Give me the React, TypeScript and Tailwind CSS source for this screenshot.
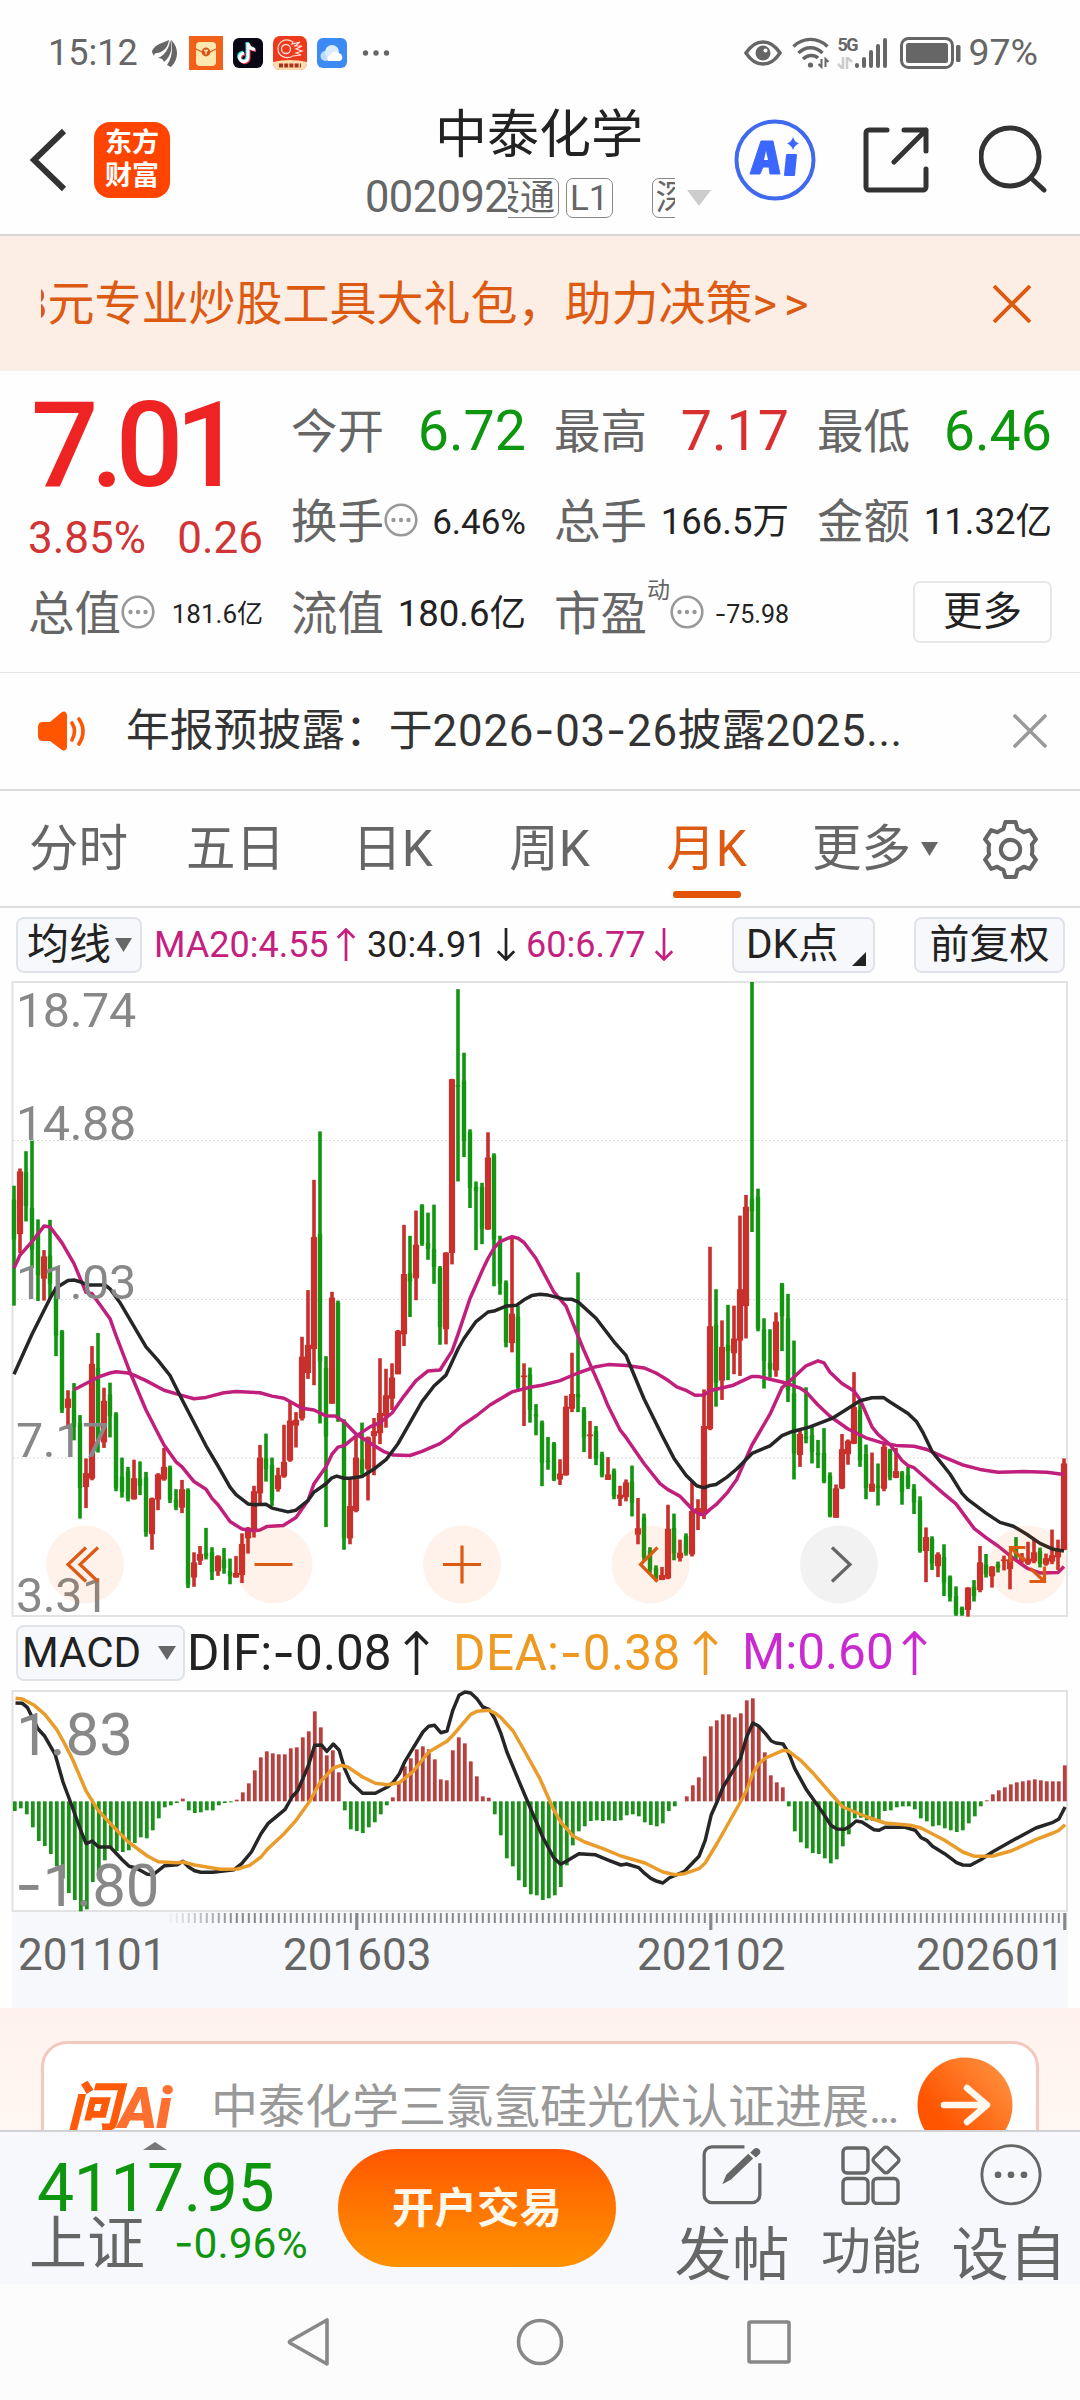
import type { ReactNode } from "react";

type Candle = [dir: "g" | "r", high: number, top: number, bottom: number, low: number];

// monthly candles, vertical values in chart units
const CANDLES: Candle[] = [
  ["g", 512, 545, 640, 797], ["r", 471, 478, 627, 672], ["g", 430, 480, 560, 597], ["g", 405, 565, 665, 708],
  ["g", 592, 625, 725, 786], ["r", 665, 680, 733, 785], ["g", 593, 678, 745, 780], ["g", 752, 770, 868, 917],
  ["g", 855, 858, 1045, 1052], ["r", 998, 1018, 1040, 1090], ["g", 981, 1000, 1085, 1117], ["g", 1057, 1075, 1230, 1303],
  ["r", 1160, 1195, 1228, 1278], ["r", 893, 935, 1208, 1212], ["g", 862, 945, 1120, 1146], ["r", 992, 1023, 1122, 1135],
  ["g", 980, 1008, 1060, 1110], ["g", 1050, 1055, 1230, 1238], ["g", 1158, 1203, 1240, 1253], ["g", 1180, 1190, 1255, 1262],
  ["r", 1163, 1207, 1257, 1258], ["g", 1167, 1208, 1225, 1247], ["g", 1192, 1205, 1335, 1346], ["r", 1253, 1255, 1340, 1377],
  ["r", 1195, 1198, 1258, 1283], ["r", 1135, 1180, 1210, 1213], ["g", 1177, 1182, 1258, 1266], ["g", 1233, 1258, 1275, 1283],
  ["r", 1211, 1233, 1277, 1290], ["g", 1231, 1235, 1460, 1468], ["r", 1383, 1407, 1443, 1465], ["r", 1368, 1387, 1403, 1413],
  ["g", 1325, 1385, 1392, 1400], ["g", 1371, 1382, 1430, 1449], ["r", 1390, 1392, 1428, 1439], ["g", 1373, 1400, 1420, 1434],
  ["g", 1398, 1428, 1440, 1459], ["r", 1392, 1432, 1443, 1443], ["r", 1338, 1363, 1437, 1456], ["r", 1323, 1325, 1350, 1386],
  ["r", 1225, 1238, 1330, 1348], ["r", 1128, 1158, 1243, 1268], ["g", 1101, 1160, 1185, 1215], ["g", 1158, 1175, 1260, 1273],
  ["r", 1182, 1200, 1233, 1239], ["r", 1080, 1168, 1203, 1206], ["r", 1025, 1070, 1165, 1168], ["r", 1050, 1068, 1082, 1134],
  ["r", 871, 918, 1065, 1070], ["r", 760, 890, 957, 971], ["r", 498, 634, 900, 986], ["g", 383, 627, 930, 1077],
  ["g", 917, 945, 1108, 1323], ["r", 764, 778, 1030, 1030], ["g", 785, 790, 1065, 1073], ["g", 1067, 1070, 1350, 1377],
  ["r", 1210, 1273, 1350, 1364], ["r", 1108, 1158, 1285, 1288], ["g", 1075, 1162, 1195, 1205], ["r", 1108, 1110, 1185, 1260],
  ["r", 1064, 1095, 1107, 1200], ["r", 922, 1052, 1100, 1126], ["r", 947, 1010, 1060, 1087], ["r", 934, 968, 1018, 1045],
  ["r", 855, 857, 960, 960], ["r", 605, 722, 865, 893], ["g", 631, 720, 740, 824], ["r", 571, 652, 732, 784],
  ["g", 556, 558, 650, 655], ["g", 576, 648, 662, 688], ["g", 557, 662, 705, 745], ["g", 703, 708, 848, 890],
  ["r", 670, 671, 853, 889], ["r", 258, 259, 672, 699], ["g", 45, 273, 277, 502], ["g", 196, 262, 405, 444],
  ["g", 378, 385, 517, 565], ["g", 502, 515, 525, 665], ["g", 505, 515, 615, 651], ["r", 385, 445, 616, 617],
  ["g", 435, 440, 640, 751], ["g", 631, 645, 745, 771], ["g", 737, 742, 885, 896], ["r", 632, 816, 886, 908],
  ["g", 797, 823, 990, 997], ["r", 934, 963, 967, 1083], ["g", 944, 960, 1045, 1075], ["g", 1031, 1055, 1060, 1105],
  ["g", 1070, 1075, 1170, 1226], ["g", 1109, 1165, 1168, 1187], ["g", 1121, 1125, 1210, 1214], ["r", 1162, 1196, 1210, 1223],
  ["r", 1011, 1037, 1200, 1201], ["r", 909, 1007, 1042, 1050], ["g", 718, 1007, 1015, 1050], ["g", 1038, 1045, 1110, 1145],
  ["r", 1071, 1103, 1107, 1161], ["g", 1083, 1095, 1160, 1176], ["g", 1144, 1150, 1200, 1205], ["r", 1157, 1198, 1211, 1211],
  ["g", 1184, 1190, 1250, 1257], ["r", 1225, 1246, 1256, 1273], ["r", 1210, 1217, 1252, 1262], ["g", 1177, 1215, 1265, 1298],
  ["r", 1254, 1326, 1341, 1364], ["g", 1291, 1300, 1395, 1405], ["g", 1371, 1380, 1425, 1432], ["g", 1414, 1420, 1445, 1452],
  ["r", 1418, 1437, 1449, 1449], ["r", 1270, 1327, 1445, 1447], ["g", 1291, 1325, 1385, 1402], ["r", 1353, 1384, 1397, 1405],
  ["g", 1338, 1345, 1385, 1391], ["r", 1215, 1285, 1388, 1393], ["r", 1257, 1278, 1290, 1330], ["r", 996, 1083, 1290, 1304],
  ["r", 657, 846, 1090, 1093], ["g", 758, 843, 980, 1037], ["r", 832, 895, 975, 1021], ["g", 795, 890, 905, 974],
  ["r", 797, 875, 910, 960], ["r", 583, 758, 880, 964], ["r", 534, 562, 798, 875], ["g", 28, 543, 573, 622],
  ["g", 519, 538, 852, 858], ["g", 827, 853, 928, 994], ["g", 853, 933, 948, 968], ["r", 813, 835, 951, 966],
  ["g", 743, 745, 822, 905], ["g", 769, 827, 998, 1026], ["g", 880, 1005, 1148, 1210], ["r", 1090, 1102, 1152, 1180],
  ["g", 991, 1108, 1113, 1124], ["g", 1085, 1105, 1145, 1172], ["g", 1116, 1147, 1152, 1183], ["g", 1088, 1147, 1215, 1219],
  ["g", 1193, 1200, 1297, 1300], ["r", 1222, 1231, 1301, 1301], ["r", 1102, 1138, 1231, 1233], ["r", 1115, 1118, 1150, 1175],
  ["r", 955, 1038, 1125, 1126], ["g", 1025, 1045, 1165, 1180], ["g", 1127, 1150, 1230, 1257], ["r", 1146, 1220, 1239, 1239],
  ["g", 1172, 1225, 1230, 1272], ["r", 1122, 1132, 1232, 1238], ["g", 1137, 1140, 1205, 1212], ["r", 1135, 1190, 1206, 1207],
  ["g", 1190, 1193, 1240, 1270], ["g", 1180, 1200, 1228, 1233], ["g", 1221, 1232, 1265, 1292], ["g", 1250, 1260, 1380, 1384],
  ["r", 1324, 1347, 1380, 1454], ["g", 1345, 1350, 1410, 1425], ["r", 1383, 1388, 1416, 1442], ["g", 1364, 1395, 1455, 1487],
  ["g", 1438, 1442, 1490, 1500], ["g", 1464, 1487, 1530, 1534], ["g", 1512, 1515, 1530, 1534], ["r", 1466, 1467, 1520, 1536],
  ["g", 1449, 1465, 1487, 1500], ["r", 1368, 1407, 1473, 1478], ["g", 1387, 1412, 1435, 1443], ["r", 1416, 1417, 1440, 1467],
  ["g", 1405, 1412, 1420, 1431], ["r", 1391, 1400, 1404, 1426], ["r", 1390, 1400, 1423, 1471], ["g", 1347, 1375, 1390, 1400],
  ["r", 1385, 1395, 1405, 1408], ["r", 1358, 1398, 1410, 1413], ["r", 1352, 1383, 1405, 1409], ["g", 1372, 1380, 1410, 1419],
  ["r", 1386, 1397, 1412, 1415], ["r", 1329, 1390, 1405, 1411], ["r", 1353, 1380, 1395, 1425], ["r", 1160, 1172, 1377, 1378],
];

// each line comes in chunks: [x offset, "x,y x,y ..."]
type Chunks = [number, string][];

const MA20: Chunks = [
  [0, "42,708 60,677 96,645 132,608 150,610 186,648 222,697 258,765 275,768 300,795 330,828 348,868 390,955 438,1045 492,1128 528,1168 546,1180 582,1215 618,1233 636,1255 654,1270 690,1310 726,1328 762,1332 780,1330 800,1322 850,1319 888,1300 924,1260 942,1220 978,1180 996,1150 1014,1133 1032,1130"],
  [1050, "0,1118 18,1107 60,1085 90,1075 126,1052 162,1012 198,975 234,952 270,950 306,905 324,865 360,780 396,715 414,685 432,660 450,645 486,633 504,637 522,647 558,685 612,765 648,798 700,900 756,1000 774,1035 810,1092 828,1110 882,1172 930,1220 954,1234 990,1250 1030,1283 1050,1293 1065,1292"],
  [2130, "0,1281 18,1270 50,1243 80,1210 108,1160 126,1128 180,1055 216,992 234,980 288,940 324,928 342,933 360,955 396,982 432,1000 450,1020 486,1085 504,1103 540,1127 576,1165 594,1177 612,1182 700,1243 738,1268 792,1326 828,1348 864,1368 918,1402 954,1422 990,1432 1044,1431 1062,1417"],
];
const MA30: Chunks = [
  [0, "42,960 96,865 150,780 168,755 204,737 222,736 240,740 262,748 315,748 330,757 360,790 438,895 474,927 510,963 546,1020 618,1130 654,1178 690,1228 708,1246 744,1268 762,1270 798,1269 816,1278 864,1287 888,1283 924,1260 942,1240 978,1220 996,1206 1010,1202 1032,1207"],
  [1050, "0,1207 36,1203 72,1185 108,1163 144,1125 180,1075 216,1025 252,988 288,962 324,900 342,875 378,835 414,812 432,810 468,798 500,796 522,783 545,773 570,770 594,772 640,781 666,782 684,788 738,827 792,883 828,915 846,950 882,1018 936,1105 972,1160 1008,1200 1040,1225 1062,1230"],
  [2130, "0,1224 18,1222 50,1205 80,1185 126,1148 180,1130 216,1106 240,1098 300,1085 366,1065 410,1043 450,1023 486,1016 520,1015 540,1026 594,1053 620,1073 640,1100 666,1143 720,1197 756,1243 774,1258 828,1290 870,1312 910,1321 950,1340 990,1362 1030,1376 1062,1380"],
];
const MA60: Chunks = [
  [0, "222,997 258,982 294,967 330,957 348,954 384,957 402,962 438,975 492,998 540,1009 582,1018 618,1015 672,1004 708,1001 780,1004 816,1012 852,1017 906,1041 942,1045 978,1059 1005,1059 1032,1073"],
  [1050, "0,1087 18,1102 60,1123 100,1143 130,1152 180,1153 216,1143 270,1125 300,1108 330,1085 380,1058 420,1033 486,1002 540,991 576,986 630,975 684,957 738,942 774,937 830,939 882,945 918,957 955,975 980,990 1010,999 1035,1010 1062,1009"],
  [2130, "0,999 70,986 126,965 144,965 225,980 270,993 288,1002 324,1033 360,1060 414,1090 468,1111 522,1124 558,1129 612,1131 648,1138 702,1157 756,1175 810,1186 864,1193 940,1191 1010,1193 1062,1198"],
];

const MACD_ZERO = 573;
const MACD_BARS = [
  602, 594, 612, 651, 692, 707, 731, 768, 805, 848, 869, 903, 897, 815, 797, 750, 715, 722, 725, 720, 698, 681, 684, 660, 624,
  591, 585, 578, 565, 600, 608, 606, 600, 600, 585, 578, 576, 568, 546, 519, 480, 441, 423, 429, 432, 432, 414, 411, 381, 363,
  303, 351, 435, 420, 486, 600, 657, 662, 668, 651, 636, 612, 585, 561, 520, 468, 444, 417, 408, 417, 447, 507, 510, 420, 381,
  399, 453, 498, 558, 562, 612, 675, 744, 768, 810, 830, 852, 855, 869, 864, 855, 830, 765, 705, 663, 648, 632, 630, 632, 630,
  632, 630, 615, 612, 618, 636, 644, 648, 639, 602, 588, 573, 558, 525, 501, 438, 348, 330, 312, 312, 321, 309, 270, 264, 348,
  426, 495, 516, 531, 588, 663, 696, 714, 728, 731, 744, 759, 747, 708, 672, 624, 622, 630, 632, 630, 602, 600, 591, 588, 588,
  597, 624, 633, 648, 645, 654, 660, 665, 660, 639, 618, 588, 570, 552, 540, 531, 522, 516, 513, 510, 507, 510, 513, 513, 513,
  465,
];
const DIF: Chunks = [
  [0, "45,278 65,279 80,292 110,355 130,378 160,432 183,515 210,590 235,662 250,700 268,692 286,710 320,710 355,748 375,768 395,773 428,792 445,793 478,766 515,763 531,753 548,770 565,781 583,786 618,786 680,778 702,760 730,725 758,670 778,640 828,597 848,560 865,540 896,465 914,405 934,404 949,423 968,401 985,420 1000,473 1018,515 1053,549 1090,549 1125,530 1141,517 1160,490 1176,453 1228,365 1245,348 1262,345 1280,367 1298,362 1315,300 1333,255 1350,245 1367,248 1385,265 1402,290 1420,297 1437,325 1455,370 1472,425 1510,520 1545,605 1568,660"],
  [1568, "8,680 40,742 60,762 78,752 113,730 160,733 200,750 235,764 252,761 287,772 305,790 322,804 340,813 357,818 375,803 420,783 462,738 480,690 497,615 515,573 532,530 582,445 600,380 618,338 636,348 655,370 672,392 685,398 706,401 723,430 740,475 775,540 820,605 845,645 862,656 885,657 900,648 918,632 935,635 970,658 985,660 1002,651 1060,651 1090,660 1107,682 1123,690 1140,708 1175,730 1210,757 1228,764 1250,765 1280,748 1315,724 1370,692 1440,653 1490,636 1507,626 1525,590"],
];
const DEA: Chunks = [
  [0, "45,264 65,266 97,283 130,312 165,358 185,395 210,445 250,542 285,600 330,650 373,695 428,737 460,754 515,757 531,755 565,764 640,777 690,776 725,765 758,740 778,715 825,670 860,630 900,572 930,515 968,473 990,465 1010,470 1053,500 1090,519 1125,523 1160,517 1200,483 1245,425 1298,393 1315,375 1367,312 1385,303 1402,301 1420,300 1437,308 1455,322 1490,362 1525,425 1568,505"],
  [1568, "40,598 60,635 78,655 96,677 130,695 183,715 235,737 305,758 357,785 392,793 420,790 462,775 480,758 515,698 582,575 600,540 618,490 636,460 655,443 706,420 723,423 757,450 792,487 845,550 880,590 950,620 1002,638 1075,645 1107,653 1175,690 1228,725 1262,738 1315,737 1370,721 1440,688 1490,668 1507,660 1525,643"],
];

const RED = "#c9302c";
const GREEN = "#129612";

const priceY = (v: number) => (v - 28) / 2.376 + 1;
const macdY = (v: number) => (v - 242) / 3 + 1;

function toPoints(chunks: Chunks, xScale: number, y: (v: number) => number) {
  return chunks
    .flatMap(([dx, pts]) =>
      pts.split(" ").map((p) => {
        const [px, py] = p.split(",").map(Number);
        return `${((px + dx) / xScale).toFixed(1)},${y(py).toFixed(1)}`;
      })
    )
    .join(" ");
}

function Line({ points, color }: { points: string; color: string }) {
  return <polyline points={points} fill="none" stroke={color} strokeWidth="3.5" strokeLinejoin="round" />;
}

function Dash() {
  return <span className="font-['Inter']">-</span>;
}

function Arrow({ down, className }: { down?: boolean; className: string }) {
  return (
    <svg viewBox="0 0 24 44" fill="none" stroke="currentColor" strokeWidth="3.6" className={className}>
      {down ? <path d="M12 0v42M1 31l11 11 11-11" /> : <path d="M12 44V2M1 13L12 2l11 11" />}
    </svg>
  );
}

function Triangle({ className }: { className: string }) {
  return (
    <svg viewBox="0 0 16 14" preserveAspectRatio="none" className={className}>
      <path d="M0 0h16L8 14z" fill="currentColor" />
    </svg>
  );
}

function Cross({ className }: { className: string }) {
  return (
    <svg viewBox="0 0 38 38" fill="none" stroke="currentColor" strokeWidth="3.8" className={className}>
      <path d="M1 1l36 36M37 1L1 37" />
    </svg>
  );
}

function InfoDots() {
  return (
    <svg viewBox="0 0 34 34" className="w-[34px] h-[34px] shrink-0 -mt-[5px] text-[#999]">
      <circle cx="17" cy="17" r="15.3" fill="none" stroke="currentColor" strokeWidth="2.6" />
      <circle cx="9.5" cy="17" r="2.2" fill="currentColor" />
      <circle cx="17" cy="17" r="2.2" fill="currentColor" />
      <circle cx="24.5" cy="17" r="2.2" fill="currentColor" />
    </svg>
  );
}

function StatusBar() {
  return (
    <div className="h-[105px] pl-[48px] pr-[42px] flex items-center justify-between text-[#666] text-[36px] leading-none">
      <div className="flex items-center">
        <span className="w-[104px]">15:12</span>
        <svg viewBox="0 0 26 28" className="w-[26px] h-[28px]" fill="#666">
          <path d="M0 12C3 5 11 4 17 1c-1 7-5 12-12 13-2 0-3 1-3 3C1 15 0 14 0 12z" />
          <path d="M6 19c7-3 11-9 12-18 3 8 1 16-6 22-1-3-3-4-6-4z" />
          <path d="M15 26c5-7 6-16 4-25 7 6 9 18 0 27z" />
        </svg>
        <svg viewBox="0 0 34 34" className="w-[34px] h-[34px] ml-[11px]">
          <rect width="34" height="34" fill="#f2601a" />
          <rect x="7" y="6" width="20" height="24" rx="4" fill="#ffe7b0" />
          <path d="M7 13l8 4a4 4 0 0 0 4 0l8-4" fill="none" stroke="#d9541a" strokeWidth="1.2" />
          <circle cx="17" cy="16" r="4.4" fill="#d9541a" />
          <path d="M15 14.5h4M17 14.5v4" stroke="#ffe7b0" strokeWidth="1.3" />
        </svg>
        <svg viewBox="0 0 30 30" className="w-[30px] h-[30px] ml-[10px]">
          <rect width="30" height="30" rx="6" fill="#0b0816" />
          <path d="M15 5v14.5a4.2 4.2 0 1 1-4-4.2M15 5c.5 4 3 6 7 6.5" transform="translate(-1 -1)" fill="none" stroke="#27e6e0" strokeWidth="3" />
          <path d="M15 5v14.5a4.2 4.2 0 1 1-4-4.2M15 5c.5 4 3 6 7 6.5" transform="translate(1 1)" fill="none" stroke="#f43b5c" strokeWidth="3" />
          <path d="M15 5v14.5a4.2 4.2 0 1 1-4-4.2M15 5c.5 4 3 6 7 6.5" fill="none" stroke="#fff" strokeWidth="3" />
        </svg>
        <svg viewBox="0 0 34 34" className="w-[34px] h-[34px] ml-[10px]">
          <rect width="34" height="34" rx="7" fill="#ee3a1c" />
          <path d="M0 26q17-4 34 0v1a7 7 0 0 1-7 7H7a7 7 0 0 1-7-7z" fill="#fbdcae" />
          <path d="M6 29.5h22" stroke="#a8321a" strokeWidth="4" strokeDasharray="4 1.2" />
          <circle cx="13" cy="13" r="4.5" fill="none" stroke="#ffe1dc" strokeWidth="1.3" />
          <path d="M20 6C12 1 5 6 5 13s8 11 15 7l8-1-5-2 6-2-6-2 6-3-7 0 5-4-8 2z" fill="none" stroke="#ffe1dc" strokeWidth="1.2" />
        </svg>
        <svg viewBox="0 0 30 30" className="w-[30px] h-[30px] ml-[10px]">
          <rect width="30" height="30" rx="6" fill="#3c8bf5" />
          <circle cx="8.5" cy="18" r="5" fill="#bcdcff" />
          <circle cx="15" cy="14" r="7" fill="#dcecff" />
          <path d="M11 23a4 4 0 0 1 2-6 6 6 0 0 1 9-2 4.3 4.3 0 0 1 1 8z" fill="#fff" />
        </svg>
        <svg viewBox="0 0 28 6" className="w-[28px] h-[6px] ml-[15px]" fill="#666">
          <circle cx="3.5" cy="3" r="2.7" />
          <circle cx="14" cy="3" r="2.7" />
          <circle cx="24.5" cy="3" r="2.7" />
        </svg>
      </div>
      <div className="flex items-center">
        <svg viewBox="0 0 38 26" className="w-[38px] h-[26px]">
          <path d="M2 13C8 4 13 2 19 2s11 2 17 11c-6 9-11 11-17 11S8 22 2 13z" fill="none" stroke="#666" strokeWidth="3.6" />
          <circle cx="19" cy="13" r="7.5" fill="#666" />
          <circle cx="21.5" cy="10.5" r="2" fill="#fff" />
        </svg>
        <svg viewBox="0 0 38 32" className="w-[38px] h-[32px] ml-[10px]" fill="none" stroke="#666" strokeWidth="3.4">
          <path d="M1.5 9.500C11 0 26 0 35.500 9.500M6.500 16c7-7 17-7 24 0M11 22c4-4 11-5 15-1" />
          <circle cx="18.500" cy="28" r="2.6" fill="#666" stroke="none" />
          <path d="M29.500 22v8l-3-3M33.500 30v-8l3 3" strokeWidth="2" />
        </svg>
        <div className="ml-[7px] w-[17px] h-[32px] flex flex-col justify-between">
          <span className="text-[18px] leading-[16px] font-bold tracking-[-1.5px]">5G</span>
          <svg viewBox="0 0 16 12" className="w-[16px] h-[12px]" fill="none" stroke="#ccc" strokeWidth="2.6">
            <path d="M6 0v12L1 7M10 12V0l5 5" />
          </svg>
        </div>
        <svg viewBox="0 0 34 32" className="w-[34px] h-[32px]" stroke="#666" strokeWidth="4" strokeLinecap="round">
          <path d="M3 28v1M10 22v7M17 15v14M24 9v20M31 3v26" />
        </svg>
        <svg viewBox="0 0 62 32" className="w-[62px] h-[32px] ml-[12px]" fill="#666">
          <rect x="1.5" y="1.5" width="51" height="29" rx="7" fill="none" stroke="#666" strokeWidth="3" />
          <rect x="6" y="6" width="42" height="20" rx="2.5" />
          <rect x="56" y="8" width="4.5" height="17" rx="1.500" />
        </svg>
        <span className="ml-[6px] text-[37.5px]">97%</span>
      </div>
    </div>
  );
}

function Tag({ children }: { children: ReactNode }) {
  return (
    <span className="h-[40px] px-[3px] shrink-0 flex items-center border border-[#888] rounded-[7px] text-[35px] leading-none whitespace-nowrap">
      {children}
    </span>
  );
}

function Header() {
  return (
    <div className="h-[131px] pl-[30px] flex border-b-2 border-[#d6d6d6]">
      <svg viewBox="0 0 38 64" className="w-[38px] h-[64px] mt-[23px]" fill="none" stroke="#333" strokeWidth="6">
        <path d="M34 3L4 32l30 29" />
      </svg>
      <div className="ml-[26px] mt-[17px] w-[76px] h-[76px] rounded-[16px] bg-[#ff4400] text-white font-bold text-[27px] leading-[33px] flex flex-col items-center justify-center">
        <span>东方</span>
        <span>财富</span>
      </div>
      <div className="ml-[197px] flex flex-col">
        <span className="mt-[5px] pl-[68px] text-[52px] leading-[52px] text-[#222]">中泰化学</span>
        <div className="mt-[16px] h-[40px] flex items-center text-[#666]">
          <span className="w-[141px] text-[43.5px] tracking-[-0.6px] leading-none -ml-[2px] mr-[2px]">002092</span>
          <div className="w-[167px] h-[40px] overflow-hidden flex">
            <div className="-ml-[62px] flex">
              <Tag>深股通</Tag>
              <span className="w-[7px] shrink-0" />
              <Tag>L1</Tag>
              <span className="w-[39px] shrink-0" />
              <Tag>深股通</Tag>
            </div>
          </div>
          <Triangle className="ml-[12px] w-[24px] h-[16px] text-[#ccc]" />
        </div>
      </div>
      <svg viewBox="0 0 82 82" className="w-[82px] h-[82px] ml-[23px] mt-[14px]">
        <circle cx="41" cy="41" r="38.5" fill="none" stroke="#3f69ee" strokeWidth="4" />
        <path d="M27 22h12l7 33H36l-1-7h-6l-3 7H16z" fill="#3b66ff" stroke="#3b66ff" strokeWidth="1" strokeLinejoin="round" />
        <path d="M32 32l-2 9h4z" fill="#fff" />
        <path d="M53 36h9l-2 20h-9z" fill="#3b66ff" stroke="#3b66ff" strokeWidth="2" strokeLinejoin="round" />
        <path d="M59 18q1.500 5 6 6.500-4.500 1.500-6 6.500-1.500-5-6-6.500 4.500-1.500 6-6.500z" fill="#3b66ff" />
      </svg>
      <svg viewBox="0 0 66 66" className="w-[66px] h-[66px] ml-[47px] mt-[22px]" fill="none" stroke="#333" strokeWidth="5" strokeLinecap="round" strokeLinejoin="round">
        <path d="M24 3H6a3 3 0 0 0-3 3v54a3 3 0 0 0 3 3h54a3 3 0 0 0 3-3V42M41 3h22v21M63 3L31 35" />
      </svg>
      <svg viewBox="0 0 68 68" className="w-[68px] h-[68px] ml-[50px] mt-[20px]" fill="none" stroke="#333" strokeWidth="5" strokeLinecap="round">
        <circle cx="31" cy="32" r="29" />
        <path d="M52 53l13 12" />
      </svg>
    </div>
  );
}

function PromoBanner() {
  return (
    <div className="h-[135px] pl-[41px] pr-[49px] bg-[#fceee4] text-[#dc5a12] flex items-center justify-between">
      <div className="overflow-hidden">
        <p className="-ml-[20px] text-[47px] leading-[60px] whitespace-nowrap">
          8元专业炒股工具大礼包，助力决策<span className="tracking-[7px]">&gt;&gt;</span>
        </p>
      </div>
      <Cross className="w-[38px] h-[38px]" />
    </div>
  );
}

function Quote({ label, children, info, sup }: { label: string; children: ReactNode; info?: boolean; sup?: string }) {
  return (
    <div className="h-[60px] flex items-center">
      <span className="text-[46.5px] text-[#666]">{label}</span>
      {sup && <sup className="text-[23px] leading-none text-[#666] -mt-[24px]">{sup}</sup>}
      {info && <InfoDots />}
      <span className="ml-auto text-[#222]">{children}</span>
    </div>
  );
}

function QuotePanel() {
  return (
    <div className="h-[302px] px-[28px] pt-[24px] border-b border-[#e6e6e6] leading-none whitespace-nowrap">
      <div className="grid grid-cols-[235px_235px_235px_235px] gap-x-[28px]">
        <div className="h-[180px]">
          <div className="h-[106px] pt-[2px] pl-[3px] text-[119px] font-medium leading-[98px] tracking-[-8px] text-[#ee2424]">7.01</div>
          <div className="mt-[15px] flex justify-between text-[44px] text-[#d03434]">
            <span>3.85%</span>
            <span>0.26</span>
          </div>
        </div>
        <div className="h-[180px] pt-[7px] flex flex-col gap-[30px]">
          <Quote label="今开"><span className="text-[55.5px]">
            <span className="text-[#0f960f]">6.72</span></span>
          </Quote>
          <Quote label="换手" info><span className="text-[35px]">6.46%</span></Quote>
        </div>
        <div className="h-[180px] pt-[7px] flex flex-col gap-[30px]">
          <Quote label="最高"><span className="text-[55.5px] text-[#d92f2f]">7.17</span></Quote>
          <Quote label="总手"><span className="text-[36.5px]">166.5万</span></Quote>
        </div>
        <div className="h-[180px] pt-[7px] flex flex-col gap-[30px]">
          <Quote label="最低"><span className="text-[55.5px] text-[#0f960f]">6.46</span></Quote>
          <Quote label="金额"><span className="text-[36.5px]">11.32亿</span></Quote>
        </div>
        <div className="pt-[9px]">
          <Quote label="总值" info><span className="text-[26px]">181.6亿</span></Quote>
        </div>
        <div className="pt-[9px]">
          <Quote label="流值"><span className="text-[36.5px]">180.6亿</span></Quote>
        </div>
        <div className="pt-[9px]">
          <Quote label="市盈" sup="动" info><span className="text-[25px]"><Dash />75.98</span></Quote>
        </div>
        <div className="pt-[6px] flex justify-end">
          <button className="w-[139px] h-[62px] border-2 border-[#e8e8e8] rounded-[7px] text-[39.5px] text-[#222]">更多</button>
        </div>
      </div>
    </div>
  );
}

function NoticeRow() {
  return (
    <div className="h-[118px] pl-[38px] pr-[33px] flex items-center border-b-2 border-[#dcdcdc]">
      <svg viewBox="0 0 50 40" className="w-[50px] h-[40px]" fill="#ff5500">
        <path d="M0 16q0-5 5-5h7L24 1q4-2 5 3v32q-1 5-5 3L12 30H5q-5 0-5-5z" />
        <path d="M34 12q5 8 0 17M41 8q8 12 0 25" fill="none" stroke="#ff5500" strokeWidth="3.6" strokeLinecap="round" />
      </svg>
      <p className="ml-[38px] text-[43.8px] leading-none text-[#333] whitespace-nowrap">
        年报预披露：于<span className="tracking-[0.8px]">2026<Dash />03<Dash />26</span>披露
        <span className="tracking-[0.6px]">2025...</span>
      </p>
      <Cross className="ml-auto w-[34px] h-[34px] text-[#999]" />
    </div>
  );
}

const TABS = ["分时", "五日", "日K", "周K", "月K"];

function PeriodTabs() {
  return (
    <div className="h-[117px] flex border-b-2 border-[#dcdcdc] text-[49.5px] leading-none text-[#666]">
      {TABS.map((t) => (
        <div
          key={t}
          className={"w-[157px] pt-[34px] flex flex-col items-center " + (t === "月K" ? "text-[#dc5a12]" : "")}
        >
          <span>{t}</span>
          {t === "月K" && <span className="mt-[16px] w-[68px] h-[7px] rounded-[3px] bg-[#e25508]" />}
        </div>
      ))}
      <span className="ml-[27px] pt-[34px]">更多</span>
      <Triangle className="ml-[10px] mt-[51px] w-[17px] h-[14px]" />
      <svg viewBox="0 0 60 60" className="ml-[42px] mt-[28px] w-[61px] h-[61px]" fill="none" stroke="#666" strokeWidth="4" strokeLinejoin="round">
        <path d="M25 3h10l2 7q3 1 6 3l6-2 6 9-4 5q1 5 0 10l4 5-6 9-6-2q-3 2-6 3l-2 7H25l-2-7q-3-1-6-3l-6 2-6-9 4-5q-1-5 0-10l-4-5 6-9 6 2q3-2 6-3z" />
        <circle cx="30" cy="30" r="9.5" />
      </svg>
    </div>
  );
}

function Chip({ className, children }: { className: string; children: ReactNode }) {
  return (
    <div className={"flex items-center shrink-0 bg-[#f7f8fb] border-2 border-[#e0e2ea] rounded-[8px] text-[#222] leading-none whitespace-nowrap " + className}>
      {children}
    </div>
  );
}

function MaRow() {
  return (
    <div className="h-[73px] pl-[16px] flex items-center text-[36px] leading-none whitespace-nowrap">
      <Chip className="w-[126px] h-[56px] pl-[9px] text-[42px]">
        均线
        <Triangle className="ml-[4px] w-[17px] h-[14px] text-[#666]" />
      </Chip>
      <div className="ml-[12px] w-[213px] flex items-center text-[#c4207f]">
        <span className="w-[182px]">MA20:4.55</span>
        <Arrow className="w-[20px] h-[33px]" />
      </div>
      <div className="w-[159px] flex items-center text-[#222]">
        <span className="w-[129px]">30:4.91</span>
        <Arrow down className="w-[20px] h-[33px]" />
      </div>
      <div className="w-[206px] flex items-center text-[#c4207f]">
        <span className="w-[128px]">60:6.77</span>
        <Arrow down className="w-[20px] h-[33px]" />
      </div>
      <Chip className="w-[143px] h-[56px] pl-[12px] text-[40.5px]">
        <span className="w-[106px]">DK点</span>
        <svg viewBox="0 0 14 14" className="w-[14px] h-[14px] mt-[28px]">
          <path d="M14 0v14H0z" fill="#222" />
        </svg>
      </Chip>
      <Chip className="ml-[39px] w-[151px] h-[56px] justify-center text-[40px]">前复权</Chip>
    </div>
  );
}

const PRICE_LABELS: [string, number][] = [
  ["18.74", 46], ["14.88", 159], ["11.03", 318], ["7.17", 476], ["3.31", 631],
];

function ChartButton({ x, color = "#dc5a12", fill = "#ff5500", d }: { x: number; color?: string; fill?: string; d: string }) {
  return (
    <g transform={`translate(${x} 583.5)`}>
      <circle r="39" fill={fill} fillOpacity="0.08" />
      <path d={d} fill="none" stroke={color} strokeWidth="3.2" />
    </g>
  );
}

function PriceChart() {
  return (
    <svg viewBox="0 0 1080 636" className="block w-[1080px] h-[636px]">
      <rect x="12.5" y="1" width="1054.5" height="634" fill="#fff" stroke="#e2e2e2" strokeWidth="2" />
      {[159.5, 318.5, 477].map((y) => (
        <line key={y} x1="13" x2="1067" y1={y} y2={y} stroke="#ddd" strokeDasharray="2 2" />
      ))}
      {CANDLES.map(([dir, high, top, bottom, low], i) => {
        const x = 14 + 6 * i;
        const body = dir === "r" ? 6.2 : 4.4;
        const color = dir === "r" ? RED : GREEN;
        return (
          <g key={i} fill={color}>
            <rect x={x - 1.8} y={priceY(high)} width={3.6} height={priceY(low) - priceY(high)} />
            <rect x={x - body / 2} y={priceY(top)} width={body} height={Math.max(1.5, priceY(bottom) - priceY(top))} />
          </g>
        );
      })}
      <Line points={toPoints(MA60, 3, priceY)} color="#c0207c" />
      <Line points={toPoints(MA20, 3, priceY)} color="#c0207c" />
      <Line points={toPoints(MA30, 3, priceY)} color="#262626" />
      <g fill="#888" fontSize="48.5" letterSpacing="-0.4">
        {PRICE_LABELS.map(([t, y]) => (
          <text key={t} x="16" y={y}>{t}</text>
        ))}
      </g>
      <ChartButton x={85} d="M1-17L-17 0 1 17M13-17L-5 0 13 17" />
      <ChartButton x={273.5} d="M-19 0h38" />
      <ChartButton x={462} d="M-19 0h38M0-19v38" />
      <ChartButton x={650.5} d="M7-17L-10 0 7 17" />
      <ChartButton x={839} color="#666" fill="#555" d="M-7-17L11 0-7 17" />
      <ChartButton x={1027.5} d="M-2-17h-15v15M-17-17L-3-4M2 17h15V2M17 17L3 4" />
    </svg>
  );
}

function MacdRow() {
  return (
    <div className="h-[73px] pl-[16px] pb-[1px] flex items-center text-[49.5px] leading-none whitespace-nowrap">
      <Chip className="w-[169px] h-[56px] pl-[4px] text-[42px]">
        <span className="w-[136px]">MACD</span>
        <Triangle className="w-[18px] h-[14px] text-[#666]" />
      </Chip>
      <div className="ml-[2px] w-[266px] flex items-center text-[#222]">
        <span className="w-[217px]">DIF:<Dash />0.08</span>
        <Arrow className="w-[25px] h-[44px]" />
      </div>
      <div className="w-[289px] flex items-center text-[#ee9a22]">
        <span className="w-[240px] tracking-[0.4px]">DEA:<Dash />0.38</span>
        <Arrow className="w-[25px] h-[44px]" />
      </div>
      <div className="flex items-center text-[#c92bd0]">
        <span className="w-[160px]">M:0.60</span>
        <Arrow className="w-[25px] h-[44px]" />
      </div>
    </div>
  );
}

function MacdChart() {
  const zero = macdY(MACD_ZERO);
  return (
    <svg viewBox="0 0 1080 222" className="block w-[1080px] h-[222px]">
      <rect x="12.5" y="1" width="1054.5" height="220" fill="#fff" stroke="#e2e2e2" strokeWidth="2" />
      {MACD_BARS.map((v, i) => {
        const y = macdY(v);
        const up = v < MACD_ZERO;
        return (
          <rect
            key={i}
            x={12.9 + 6 * i}
            y={up ? y : zero}
            width="3.8"
            height={Math.abs(zero - y)}
            fill={up ? "#b8403f" : "#1e901e"}
          />
        );
      })}
      <Line points={toPoints(DIF, 2.904, macdY)} color="#262626" />
      <Line points={toPoints(DEA, 2.904, macdY)} color="#ea9c2a" />
      <g fill="#888" fontSize="60">
        <text x="16" y="65">1.83</text>
        <text x="15" y="216"><tspan fontFamily="Inter">-</tspan>1.80</text>
      </g>
    </svg>
  );
}

const MAJOR_TICKS = [57, 116, 175];

function TimeAxis() {
  return (
    <div className="mx-[12px] h-[96px] bg-[#f7f8fb] text-[44px] leading-none text-[#666]">
      <svg viewBox="12 0 1056 20" className="block w-[1056px] h-[20px]">
        {CANDLES.map((_, i) => {
          const major = MAJOR_TICKS.includes(i);
          return (
            <rect
              key={i}
              x={14.8 + 6 * i - (major ? 1.6 : 1)}
              y="1"
              width={major ? 3.2 : 2}
              height={major ? 17 : 10}
              fill="#888"
              opacity={Math.min(1, Math.max(0, (i - 25) / 12))}
            />
          );
        })}
      </svg>
      <div className="mt-[1px] pl-[6px] flex">
        <span className="w-[265px]">201101</span>
        <span className="w-[354px]">201603</span>
        <span className="w-[279px]">202102</span>
        <span>202601</span>
      </div>
    </div>
  );
}

function AskAi() {
  return (
    <div className="h-[122px] pt-[33px] px-[41px] bg-linear-to-b from-[#fff2ee] to-[#fff7f2] overflow-hidden">
      <div className="h-[130px] border-3 border-[#f3c8bf] rounded-[26px] bg-white flex">
        <div className="ml-[23px] mt-[36px] w-[123px] h-[56px] flex items-center text-[53px] leading-none font-black italic text-[#ff5a0a] tracking-[-1px]">
          问<span className="text-[58px] text-[#ff7030]">Ai</span>
        </div>
        <p className="mt-[37px] ml-[21px] w-[702px] text-[47px] leading-[52px] text-[#999] whitespace-nowrap">
          中泰化学三氯氢硅光伏认证进展<span className="tracking-[-3.2px]">...</span>
        </p>
        <svg viewBox="0 0 96 96" className="w-[96px] h-[96px] mt-[13px] shrink-0 ml-[4px]">
          <defs>
            <linearGradient id="go" x1="0.2" y1="0.6" x2="0.8" y2="0.1">
              <stop offset="0" stopColor="#ff5500" />
              <stop offset="1" stopColor="#ff8a38" />
            </linearGradient>
          </defs>
          <circle cx="48" cy="48" r="47.5" fill="url(#go)" />
          <path d="M27 48h42M50 31l20 17-20 17" fill="none" stroke="#fff8ee" strokeWidth="6.5" strokeLinecap="round" strokeLinejoin="round" />
        </svg>
      </div>
    </div>
  );
}

function BottomBar() {
  return (
    <div className="h-[154px] flex bg-[#f7f8fb] border-t-2 border-[#d2d2d6] leading-none text-[#666] whitespace-nowrap overflow-hidden">
      <div className="w-[338px] pl-[29px] pt-[10px]">
        <svg viewBox="0 0 24 8" className="block ml-[114px] w-[24px] h-[8px]">
          <path d="M0 8L12 0l12 8z" fill="#777" />
        </svg>
        <div className="pl-[8px] mt-[5px] text-[66px] leading-[67px] tracking-[-0.4px] text-[#0f960f]">4117.95</div>
        <div className="flex items-center -mt-[7px]">
          <span className="text-[58px]">上证</span>
          <span className="ml-[29px] text-[42.5px] text-[#0f960f]"><Dash />0.96%</span>
        </div>
      </div>
      <button className="mt-[17px] pt-[3px] w-[278px] h-[118px] rounded-full bg-linear-to-b from-[#ff5500] to-[#ff9100] text-[42.5px] font-bold text-[#fff8ec]">
        开户交易
      </button>
      <div className="ml-[48px] w-[136px] pt-[13px] flex flex-col items-center">
        <svg viewBox="0 0 62 62" className="w-[62px] h-[62px]" fill="none" stroke="#666" strokeWidth="3.4">
          <path d="M44 2H10a8 8 0 0 0-8 8v42a8 8 0 0 0 8 8h42a8 8 0 0 0 8-8V19" />
          <path d="M21 41l4-10L48 9l5 5-23 22z" fill="#666" stroke="none" />
          <path d="M50 8l4-4a4 4 0 0 1 6 5l-4 4z" fill="#666" stroke="none" />
        </svg>
        <span className="mt-[22px] text-[57.5px]">发帖</span>
      </div>
      <div className="w-[142px] pt-[13px] flex flex-col items-center">
        <svg viewBox="0 0 60 60" className="w-[60px] h-[60px]" fill="none" stroke="#666" strokeWidth="3.4">
          <rect x="2" y="3" width="25" height="25" rx="4" />
          <rect x="2" y="33.5" width="25" height="25" rx="4" />
          <rect x="32" y="33.5" width="25" height="25" rx="4" />
          <rect x="35" y="5" width="20" height="20" rx="3" transform="rotate(45 45 15)" />
        </svg>
        <span className="mt-[22px] text-[50px]">功能</span>
      </div>
      <div className="w-[138px] pt-[12px] flex flex-col items-center">
        <svg viewBox="0 0 64 64" className="w-[64px] h-[64px]" fill="#666">
          <circle cx="32" cy="32" r="30.3" fill="none" stroke="#666" strokeWidth="3" />
          <circle cx="18.5" cy="32" r="3.5" />
          <circle cx="32" cy="32" r="3.5" />
          <circle cx="45.5" cy="32" r="3.5" />
        </svg>
        <span className="mt-[21px] -ml-[4px] text-[57.5px]">设自</span>
      </div>
    </div>
  );
}

function NavBar() {
  return (
    <div className="h-[116px] pl-[287px] flex bg-[#fcfcfc]">
      <svg viewBox="0 0 44 50" className="mt-[33px] w-[44px] h-[50px]" fill="none" stroke="#888" strokeWidth="3.6" strokeLinejoin="round">
        <path d="M40 3v44L3 26q-1-1 0-2z" />
      </svg>
      <svg viewBox="0 0 48 48" className="ml-[185px] mt-[34px] w-[48px] h-[48px]" fill="none" stroke="#888" strokeWidth="3.6">
        <circle cx="24" cy="24" r="21.5" />
      </svg>
      <svg viewBox="0 0 44 44" className="ml-[183px] mt-[36px] w-[44px] h-[44px]" fill="none" stroke="#888" strokeWidth="3.6">
        <rect x="2" y="2" width="40" height="40" rx="1.5" />
      </svg>
    </div>
  );
}

export default function App() {
  return (
    <main className="w-[1080px] h-[2400px] overflow-hidden bg-[#fefefe] font-['Roboto','Noto_Sans_CJK_SC',sans-serif]">
      <StatusBar />
      <Header />
      <PromoBanner />
      <QuotePanel />
      <NoticeRow />
      <PeriodTabs />
      <MaRow />
      <PriceChart />
      <MacdRow />
      <MacdChart />
      <TimeAxis />
      <AskAi />
      <BottomBar />
      <NavBar />
    </main>
  );
}
